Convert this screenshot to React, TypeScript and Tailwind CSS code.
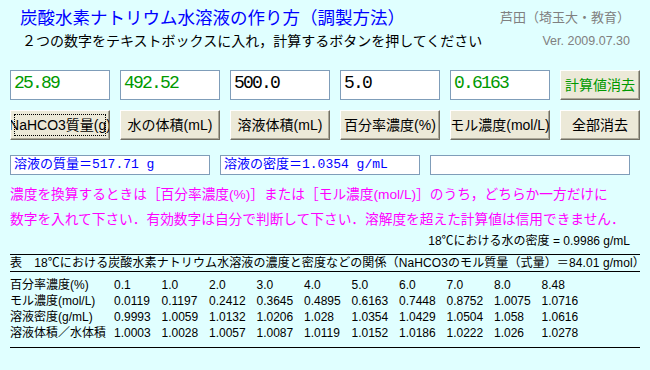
import React from 'react';

const sans = "font-['Liberation_Sans','Noto_Sans_CJK_JP',sans-serif]";
const mono = "font-['Liberation_Mono','Noto_Sans_CJK_JP',monospace]";

const inputs = [
  { value: '25.89', color: 'text-[#009900]' },
  { value: '492.52', color: 'text-[#009900]' },
  { value: '500.0', color: 'text-black' },
  { value: '5.0', color: 'text-black' },
  { value: '0.6163', color: 'text-[#009900]' },
];

const buttons = ['NaHCO3質量(g)', '水の体積(mL)', '溶液体積(mL)', '百分率濃度(%)', 'モル濃度(mol/L)'];

const rows = [
  ['百分率濃度(%)', '0.1', '1.0', '2.0', '3.0', '4.0', '5.0', '6.0', '7.0', '8.0', '8.48'],
  ['モル濃度(mol/L)', '0.0119', '0.1197', '0.2412', '0.3645', '0.4895', '0.6163', '0.7448', '0.8752', '1.0075', '1.0716'],
  ['溶液密度(g/mL)', '0.9993', '1.0059', '1.0132', '1.0206', '1.028', '1.0354', '1.0429', '1.0504', '1.058', '1.0616'],
  ['溶液体積／水体積', '1.0003', '1.0028', '1.0057', '1.0087', '1.0119', '1.0152', '1.0186', '1.0222', '1.026', '1.0278'],
];

function XpButton({ children, className = '', focused = false }: { children: React.ReactNode; className?: string; focused?: boolean }) {
  return (
    <div
      className={`relative h-[30px] flex items-center justify-center overflow-hidden whitespace-nowrap bg-[#ECE9D8] border border-t-white border-l-white border-r-[#716F64] border-b-[#716F64] shadow-[inset_-1px_-1px_0_#ACA899] text-[14px] ${className}`}
    >
      {focused && <div className="absolute inset-[3px] border border-dotted border-black" />}
      {children}
    </div>
  );
}

export default function App() {
  return (
    <div className={`w-[650px] h-[370px] overflow-hidden bg-[#E0FFFF] ${sans}`}>
      <div className="flex justify-between items-end pl-[20px] pr-[20px] pt-[8px]">
        <div className="text-[17.5px] leading-[20px] text-[#0000FF] whitespace-nowrap">
          炭酸水素ナトリウム水溶液の作り方（調製方法）
        </div>
        <div className="text-[13px] leading-[20px] text-[#808080] whitespace-nowrap">芦田（埼玉大・教育）</div>
      </div>
      <div className="flex justify-between items-center pl-[22px] pr-[20px] mt-[5px] h-[16px]">
        <div className="text-[14px] leading-[16px] text-black whitespace-nowrap">
          ２つの数字をテキストボックスに入れ，計算するボタンを押してください
        </div>
        <div className="text-[12.5px] leading-[16px] text-[#808080] whitespace-nowrap">Ver. 2009.07.30</div>
      </div>

      <div className="flex gap-[10px] px-[10px] mt-[21px]">
        {inputs.map((it) => (
          <div
            key={it.value}
            className={`w-[100px] h-[30px] bg-white border border-[#7F9DB9] pl-[3px] pt-[1px] ${mono} text-[18px] leading-[22px] tracking-[-1.8px] ${it.color}`}
          >
            {it.value}
          </div>
        ))}
        <XpButton className="w-[80px] text-[#009900]">計算値消去</XpButton>
      </div>

      <div className="flex gap-[10px] px-[10px] mt-[10px]">
        {buttons.map((b, i) => (
          <XpButton key={b} className="w-[100px] text-black" focused={i === 0}>
            {b}
          </XpButton>
        ))}
        <XpButton className="w-[80px] text-black">全部消去</XpButton>
      </div>

      <div className="flex gap-[10px] px-[10px] mt-[15px]">
        <div className={`w-[200px] h-[20px] bg-white border border-[#7F9DB9] pl-[3px] ${mono} text-[13px] leading-[18px] text-[#0000FF] whitespace-nowrap`}>
          溶液の質量＝517.71 g
        </div>
        <div className={`w-[200px] h-[20px] bg-white border border-[#7F9DB9] pl-[3px] ${mono} text-[13px] leading-[18px] text-[#0000FF] whitespace-nowrap`}>
          溶液の密度＝1.0354 g/mL
        </div>
        <div className="w-[200px] h-[20px] bg-white border border-[#7F9DB9]" />
      </div>

      <div className="mt-[7px] px-[10px] text-[13.7px] leading-[25px] text-[#FF00FF] whitespace-nowrap">
        濃度を換算するときは［百分率濃度(%)］または［モル濃度(mol/L)］のうち，どちらか一方だけに
        <br />
        数字を入れて下さい．有効数字は自分で判断して下さい．溶解度を超えた計算値は信用できません．
      </div>

      <div className="mt-[1px] pr-[20px] text-right text-[12px] leading-[16px] text-black whitespace-nowrap">
        18℃における水の密度 = 0.9986 g/mL
      </div>

      <div className="mx-[10px] mt-[5px] text-[12px] text-black">
        <div className="h-px bg-black" />
        <div className="h-[16px] leading-[16px] whitespace-nowrap tracking-[0.1px]">
          表　18℃における炭酸水素ナトリウム水溶液の濃度と密度などの関係（NaHCO3のモル質量（式量）＝84.01 g/mol）
        </div>
        <div className="h-px bg-black" />
        <div className="pt-[5px]">
          {rows.map((r) => (
            <div key={r[0]} className="grid grid-cols-[104px_repeat(10,47.5px)] h-[16px] leading-[16px] whitespace-nowrap">
              {r.map((c, i) => (
                <div key={i}>{c}</div>
              ))}
            </div>
          ))}
        </div>
        <div className="h-px bg-black mt-[6px]" />
      </div>
    </div>
  );
}
